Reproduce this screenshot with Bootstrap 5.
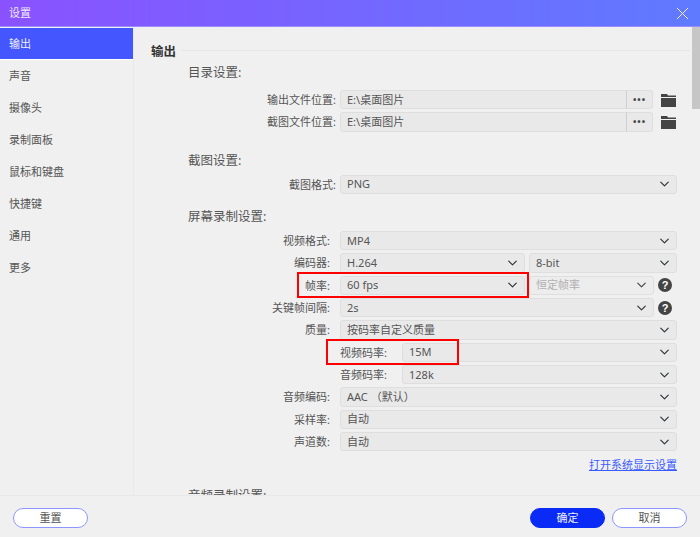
<!DOCTYPE html>
<html lang="zh-CN">
<head>
<meta charset="UTF-8">
<title>设置</title>
<link href="https://cdn.jsdelivr.net/npm/bootstrap@5.3.0/dist/css/bootstrap.min.css" rel="stylesheet">
<style>
html, body { height: 100%; }
body {
    width: 700px; height: 537px; overflow: hidden; background: #f0f0f0; color: #555;
    font-family: "Noto Sans", "Noto Sans CJK SC", sans-serif; font-size: 11px; line-height: 16px;
}
.title-bar { height: 27px; padding: 0 11px 0 9px; background: linear-gradient(90deg, #8a52ff, #5f7aff); color: #f1eaff; border-bottom: 1px solid #9d8cff; }
.side-bar { width: 134px; border-right: 1px solid #e9e9e9; padding-top: 1px; }
.side-item { height: 32px; padding-left: 9px; display: flex; align-items: center; }
.side-item.active { background: #4457ff; color: #eef; border-bottom: 1px solid #fff; }
.main-pane { overflow: hidden; position: relative; padding: 17px 0 0 17px; }
.sec-title { font-size: 12.5px; font-weight: 700; color: #333; height: 16px; line-height: 16px; }
.sec-title::after { content: ""; flex: 1; height: 1px; background: #e6e6e6; margin: 0 10px 4px 5px; }
.group-title { font-size: 12.5px; margin-left: 37px; height: 18px; line-height: 18px; }
.set-row { height: 19.33px; margin-bottom: 3px; margin-right: 23px; }
.set-label { width: 189px; padding-right: 4px; text-align: right; flex-shrink: 0; white-space: nowrap; line-height: 19px; }
.set-label.num { padding-right: 10px; }
.form-select.box-sel, .form-control.box-path, .dots-btn {
    height: 100%; min-height: 0; font-size: 11px; line-height: 15px; padding: 0 20px 1px 6px; color: #555;
    background-color: #e9e9e9; border: 1px solid #dedede; border-radius: 3px;
}
.form-select.box-sel { background-position: right 5px center; background-size: 13px 10px; font-family: inherit; }
.form-select.box-sel.half-sel { width: 185px; flex: none; }
.form-select.box-sel:disabled { color: #aaa; background-color: #ededed; opacity: .9; }
.form-control.box-path { padding-right: 4px; }
.dots-btn { width: 27px; padding: 0; font-weight: 700; font-size: 9px; letter-spacing: 1px; color: #444; line-height: 14px; border-left: 1px solid #cfcfcf; }
.folder-ico { width: 15px; height: 14px; margin-left: 8px; margin-right: 1px; margin-top: 3px; flex-shrink: 0; }
.help-dot {
    width: 14px; height: 14px; border-radius: 50%; background: #444; color: #fff; font-size: 11px; font-weight: 700;
    line-height: 14px; text-align: center; margin-left: 4px; margin-right: 5px; flex-shrink: 0; font-family: "Liberation Sans", sans-serif;
}
.help-dot.in-gap { margin-left: 0; }
.inner-label { width: 62px; flex-shrink: 0; white-space: nowrap; line-height: 19px; }
.sys-link { color: #3a5bff; text-decoration: underline; }
.red-mark { position: absolute; border: 2px solid #f00; pointer-events: none; }
.fps-mark { left: 163px; top: 245px; width: 232px; height: 26px; }
.rate-mark { left: 192px; top: 312px; width: 133px; height: 26px; }
.scroll-thumb { position: absolute; right: 0; top: 0; width: 8px; height: 82px; background: #c6c6c6; }
.foot-bar { height: 42px; border-top: 1px solid #e9e9e9; padding: 12px 13px 0 13px; }
.foot-gap { gap: 7px; }
.pill-btn {
    width: 75px; height: 20px; padding: 0; border-radius: 10px; font-size: 11px; line-height: 16px; color: #555;
    background: #fff; border: 1px solid #8d96ff;
}
.pill-btn.primary-pill { background: #0a2bf5; border-color: #0a2bf5; color: #eef; }
.gap-dir { margin-top: 4px; margin-bottom: 8px; }
.gap-shot { margin-top: 20px; margin-bottom: 5px; }
.gap-screen { margin-top: 14px; margin-bottom: 5px; }
.gap-link { margin: 6px 23px 0 0; }
.gap-audio { margin-top: 14px; }
</style>
</head>
<body class="d-flex flex-column">
<div class="title-bar d-flex align-items-center justify-content-between flex-shrink-0">
    <span>设置</span>
    <svg width="13" height="13" viewBox="0 0 13 13" fill="none" stroke="#eef" stroke-width="1"><path d="M1 1l11 11M12 1L1 12"/></svg>
</div>
<div class="d-flex flex-grow-1 overflow-hidden">
    <div class="side-bar flex-shrink-0">
        <div class="side-item active">输出</div>
        <div class="side-item">声音</div>
        <div class="side-item">摄像头</div>
        <div class="side-item">录制面板</div>
        <div class="side-item">鼠标和键盘</div>
        <div class="side-item">快捷键</div>
        <div class="side-item">通用</div>
        <div class="side-item">更多</div>
    </div>
    <div class="main-pane flex-grow-1">
        <div class="scroll-thumb"></div>
        <div class="sec-title d-flex align-items-center">输出</div>

        <div class="group-title gap-dir">目录设置:</div>
        <div class="set-row d-flex">
            <div class="set-label">输出文件位置:</div>
            <div class="input-group flex-nowrap h-100 flex-grow-1">
                <input class="form-control box-path" value="E:\桌面图片" readonly>
                <button class="btn dots-btn" type="button">•••</button>
            </div>
            <svg class="folder-ico" viewBox="0 0 15 14"><path fill="#444" d="M0 1h6l1 1.500h8V4H0zM0 5h15v9H0z"/></svg>
        </div>
        <div class="set-row d-flex">
            <div class="set-label">截图文件位置:</div>
            <div class="input-group flex-nowrap h-100 flex-grow-1">
                <input class="form-control box-path" value="E:\桌面图片" readonly>
                <button class="btn dots-btn" type="button">•••</button>
            </div>
            <svg class="folder-ico" viewBox="0 0 15 14"><path fill="#444" d="M0 1h6l1 1.500h8V4H0zM0 5h15v9H0z"/></svg>
        </div>

        <div class="group-title gap-shot">截图设置:</div>
        <div class="set-row d-flex">
            <div class="set-label">截图格式:</div>
            <select class="form-select box-sel"><option>PNG</option></select>
        </div>

        <div class="group-title gap-screen">屏幕录制设置:</div>
        <div class="set-row d-flex">
            <div class="set-label num">视频格式:</div>
            <select class="form-select box-sel"><option>MP4</option></select>
        </div>
        <div class="set-row d-flex">
            <div class="set-label num">编码器:</div>
            <div class="d-flex flex-grow-1 gap-1 h-100">
                <select class="form-select box-sel half-sel"><option>H.264</option></select>
                <select class="form-select box-sel"><option>8-bit</option></select>
            </div>
        </div>
        <div class="set-row d-flex">
            <div class="set-label num">帧率:</div>
            <div class="d-flex flex-grow-1 gap-1 h-100 align-items-center">
                <select class="form-select box-sel half-sel"><option>60 fps</option></select>
                <select class="form-select box-sel" disabled><option>恒定帧率</option></select>
                <span class="help-dot in-gap">?</span>
            </div>
        </div>
        <div class="set-row d-flex align-items-center">
            <div class="set-label num">关键帧间隔:</div>
            <select class="form-select box-sel"><option>2s</option></select>
            <span class="help-dot">?</span>
        </div>
        <div class="set-row d-flex">
            <div class="set-label num">质量:</div>
            <select class="form-select box-sel"><option>按码率自定义质量</option></select>
        </div>
        <div class="set-row d-flex">
            <div class="set-label num"></div>
            <div class="inner-label">视频码率:</div>
            <select class="form-select box-sel"><option>15M</option></select>
        </div>
        <div class="set-row d-flex">
            <div class="set-label num"></div>
            <div class="inner-label">音频码率:</div>
            <select class="form-select box-sel"><option>128k</option></select>
        </div>
        <div class="set-row d-flex">
            <div class="set-label num">音频编码:</div>
            <select class="form-select box-sel"><option>AAC （默认）</option></select>
        </div>
        <div class="set-row d-flex">
            <div class="set-label num">采样率:</div>
            <select class="form-select box-sel"><option>自动</option></select>
        </div>
        <div class="set-row d-flex">
            <div class="set-label num">声道数:</div>
            <select class="form-select box-sel"><option>自动</option></select>
        </div>
        <div class="text-end gap-link"><a class="sys-link" href="#">打开系统显示设置</a></div>
        <div class="group-title gap-audio">音频录制设置:</div>

        <div class="red-mark fps-mark"></div>
        <div class="red-mark rate-mark"></div>
    </div>
</div>
<div class="foot-bar d-flex justify-content-between flex-shrink-0">
    <button class="btn pill-btn" type="button">重置</button>
    <div class="d-flex foot-gap">
        <button class="btn pill-btn primary-pill" type="button">确定</button>
        <button class="btn pill-btn" type="button">取消</button>
    </div>
</div>
<script src="https://cdn.jsdelivr.net/npm/bootstrap@5.3.0/dist/js/bootstrap.bundle.min.js"></script>
</body>
</html>
